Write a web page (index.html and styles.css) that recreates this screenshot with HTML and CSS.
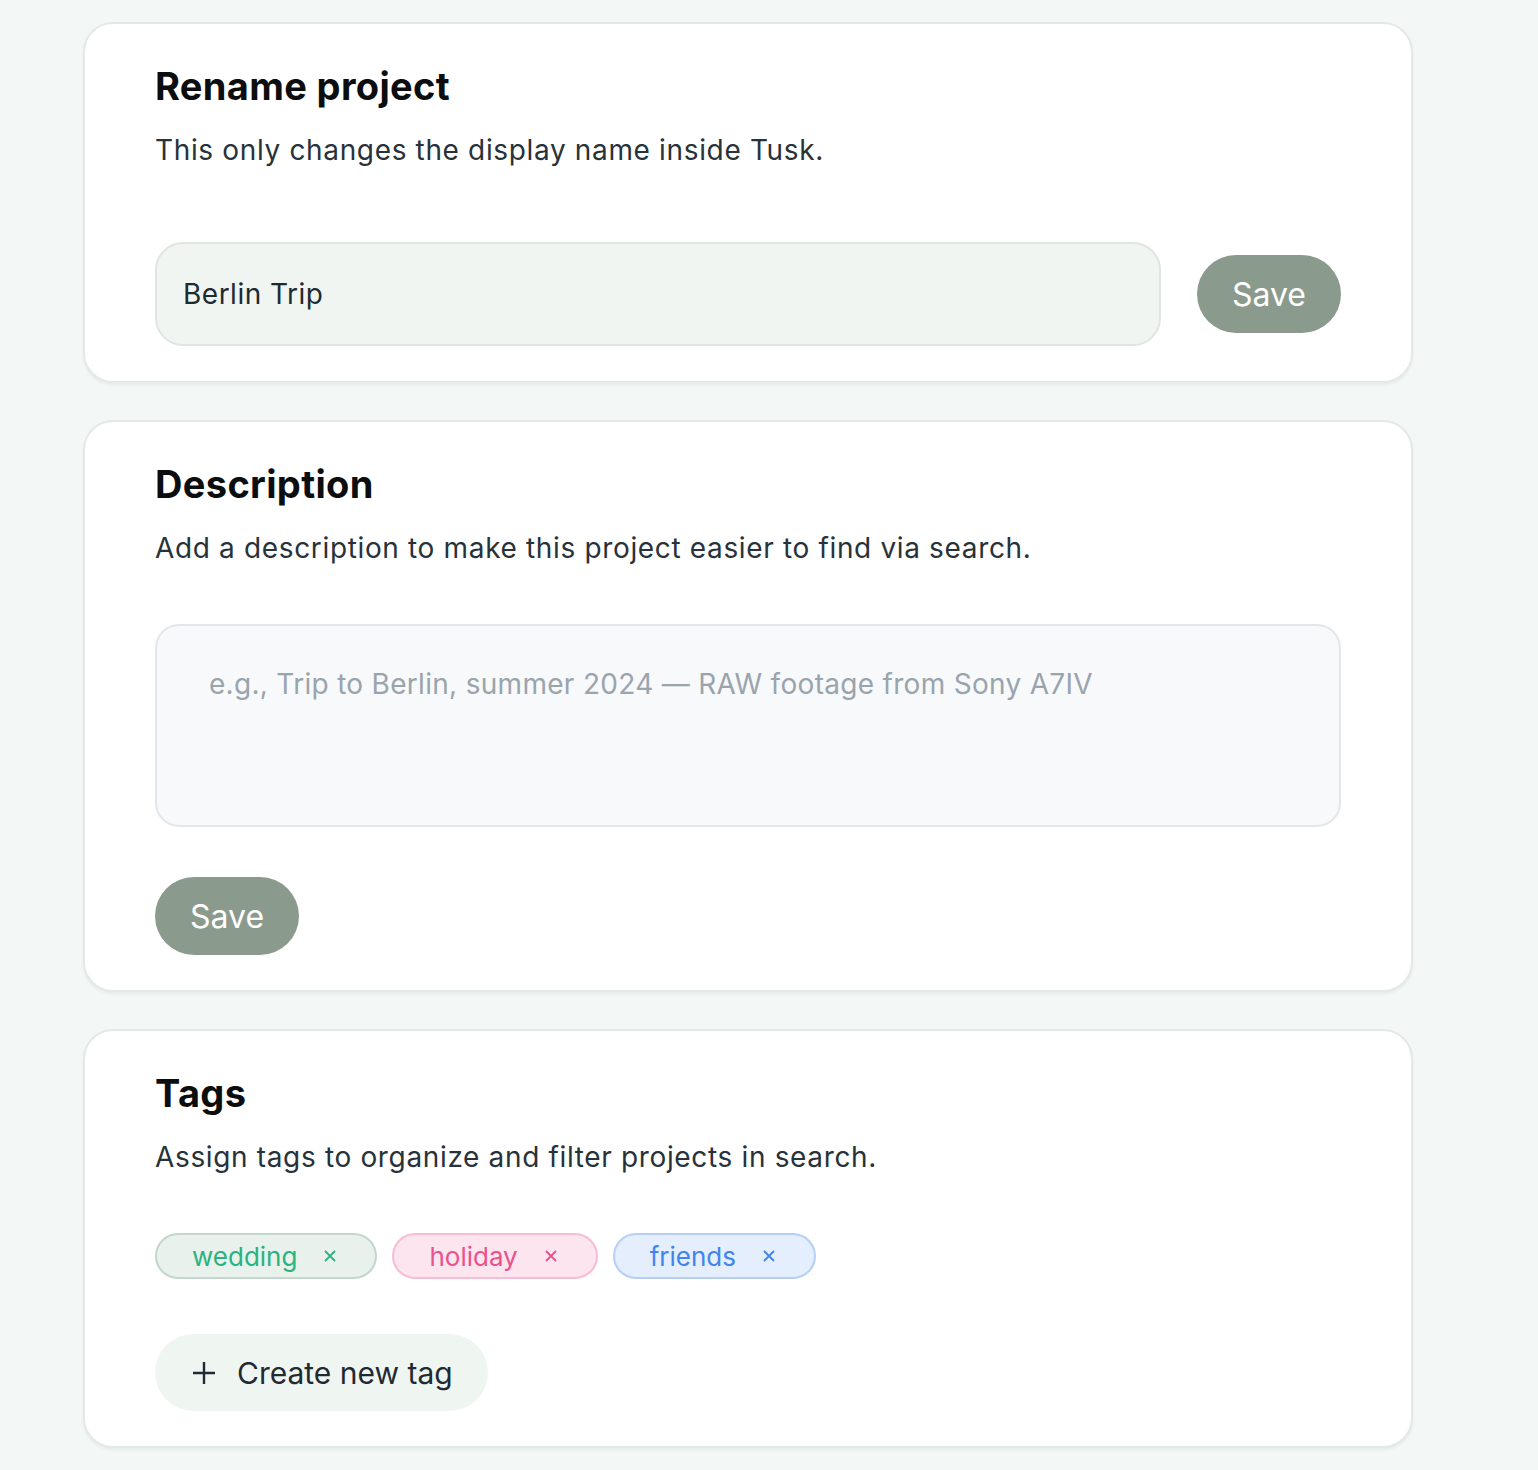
FILE: index.html
```html
<!DOCTYPE html>
<html lang="en">
<head>
<meta charset="utf-8">
<title>Project settings</title>
<link rel="stylesheet" href="styles.css">
</head>
<body>
<main class="page">
  <section class="card">
    <h2 class="card-title">Rename project</h2>
    <p class="card-sub">This only changes the display name inside Tusk.</p>
    <div class="rename-row">
      <div class="text-input">Berlin Trip</div>
      <button class="btn-save">Save</button>
    </div>
  </section>

  <section class="card">
    <h2 class="card-title">Description</h2>
    <p class="card-sub">Add a description to make this project easier to find via search.</p>
    <div class="textarea">e.g., Trip to Berlin, summer 2024 — RAW footage from Sony A7IV</div>
    <div class="desc-actions">
      <button class="btn-save">Save</button>
    </div>
  </section>

  <section class="card">
    <h2 class="card-title">Tags</h2>
    <p class="card-sub">Assign tags to organize and filter projects in search.</p>
    <div class="tags">
      <span class="tag tag-green">wedding<svg class="tag-x" viewBox="0 0 14 14"><path d="M2 2L12 12M12 2L2 12"/></svg></span>
      <span class="tag tag-pink">holiday<svg class="tag-x" viewBox="0 0 14 14"><path d="M2 2L12 12M12 2L2 12"/></svg></span>
      <span class="tag tag-blue">friends<svg class="tag-x" viewBox="0 0 14 14"><path d="M2 2L12 12M12 2L2 12"/></svg></span>
    </div>
    <div class="tag-actions">
      <button class="btn-create"><svg class="plus" viewBox="0 0 22 22"><path d="M11 0V22M0 11H22"/></svg>Create new tag</button>
    </div>
  </section>
</main>
</body>
</html>
```
FILE: styles.css
```css
* { box-sizing: border-box; }
html, body { margin: 0; padding: 0; }
body {
  background: #f3f7f6;
  font-family: Inter, "Noto Sans", sans-serif;
  color: #27323a;
}
.page {
  display: flex;
  flex-direction: column;
  gap: 37px;
  padding: 22px 0 24px 83px;
  width: 1413px;
}
.card {
  background: #ffffff;
  border: 2px solid #e3e8e8;
  border-radius: 30px;
  padding: 40px 70px 35px;
  box-shadow: 0 2px 3px rgba(40, 60, 60, 0.06);
}
.card-title {
  margin: 0;
  font-size: 38px;
  line-height: 44px;
  font-weight: 700;
  color: #0b0d0e;
  letter-spacing: 0.35px;
}
.card-sub {
  margin: 22px 0 0;
  font-size: 28px;
  line-height: 40px;
  font-weight: 400;
  color: #27323a;
  letter-spacing: 0.65px;
}
.rename-row {
  margin-top: 72px;
  display: flex;
  align-items: center;
  gap: 36px;
}
.text-input {
  flex: 1;
  height: 104px;
  border: 2px solid #dfe6e2;
  background: #f0f5f2;
  border-radius: 28px;
  padding-left: 26px;
  display: flex;
  align-items: center;
  font-size: 28px;
  letter-spacing: 0.5px;
  color: #1e2a32;
}
.btn-save {
  height: 78px;
  padding: 0 35px;
  border: none;
  border-radius: 39px;
  background: #8a9a8c;
  color: #ffffff;
  font-family: Inter, "Noto Sans", sans-serif;
  font-size: 32px;
  font-weight: 400;
}
.textarea {
  margin-top: 56px;
  height: 203px;
  border: 2px solid #e3e7ea;
  background: #f7f9fa;
  border-radius: 24px;
  padding: 38px 52px;
  font-size: 28px;
  line-height: 40px;
  letter-spacing: 0.3px;
  color: #9aa4ad;
}
.desc-actions { margin-top: 50px; display: flex; }
.tags {
  margin-top: 56px;
  display: flex;
  gap: 15px;
}
.tag {
  height: 46px;
  border-radius: 23px;
  border: 2px solid;
  padding: 0 38px 0 35px;
  display: flex;
  align-items: center;
  gap: 26px;
  font-size: 26px;
}
.tag-x {
  width: 14px;
  height: 14px;
  fill: none;
  stroke: currentColor;
  stroke-width: 1.8;
}
.tag-green { background: #e8f1ec; border-color: #c3d7cd; color: #2bb37f; }
.tag-pink { background: #fde5ef; border-color: #f8bcd3; color: #e9528c; }
.tag-blue { background: #e4eefd; border-color: #b6cff7; color: #4184ef; }
.tag-actions { margin-top: 55px; display: flex; }
.btn-create {
  height: 77px;
  border: none;
  border-radius: 39px;
  background: #eff5f1;
  padding: 0 35px 0 38px;
  display: flex;
  align-items: center;
  gap: 22px;
  font-family: Inter, "Noto Sans", sans-serif;
  font-size: 30px;
  color: #1f2a33;
}
.plus {
  width: 22px;
  height: 22px;
  fill: none;
  stroke: #1f2a33;
  stroke-width: 2.4;
}
```
